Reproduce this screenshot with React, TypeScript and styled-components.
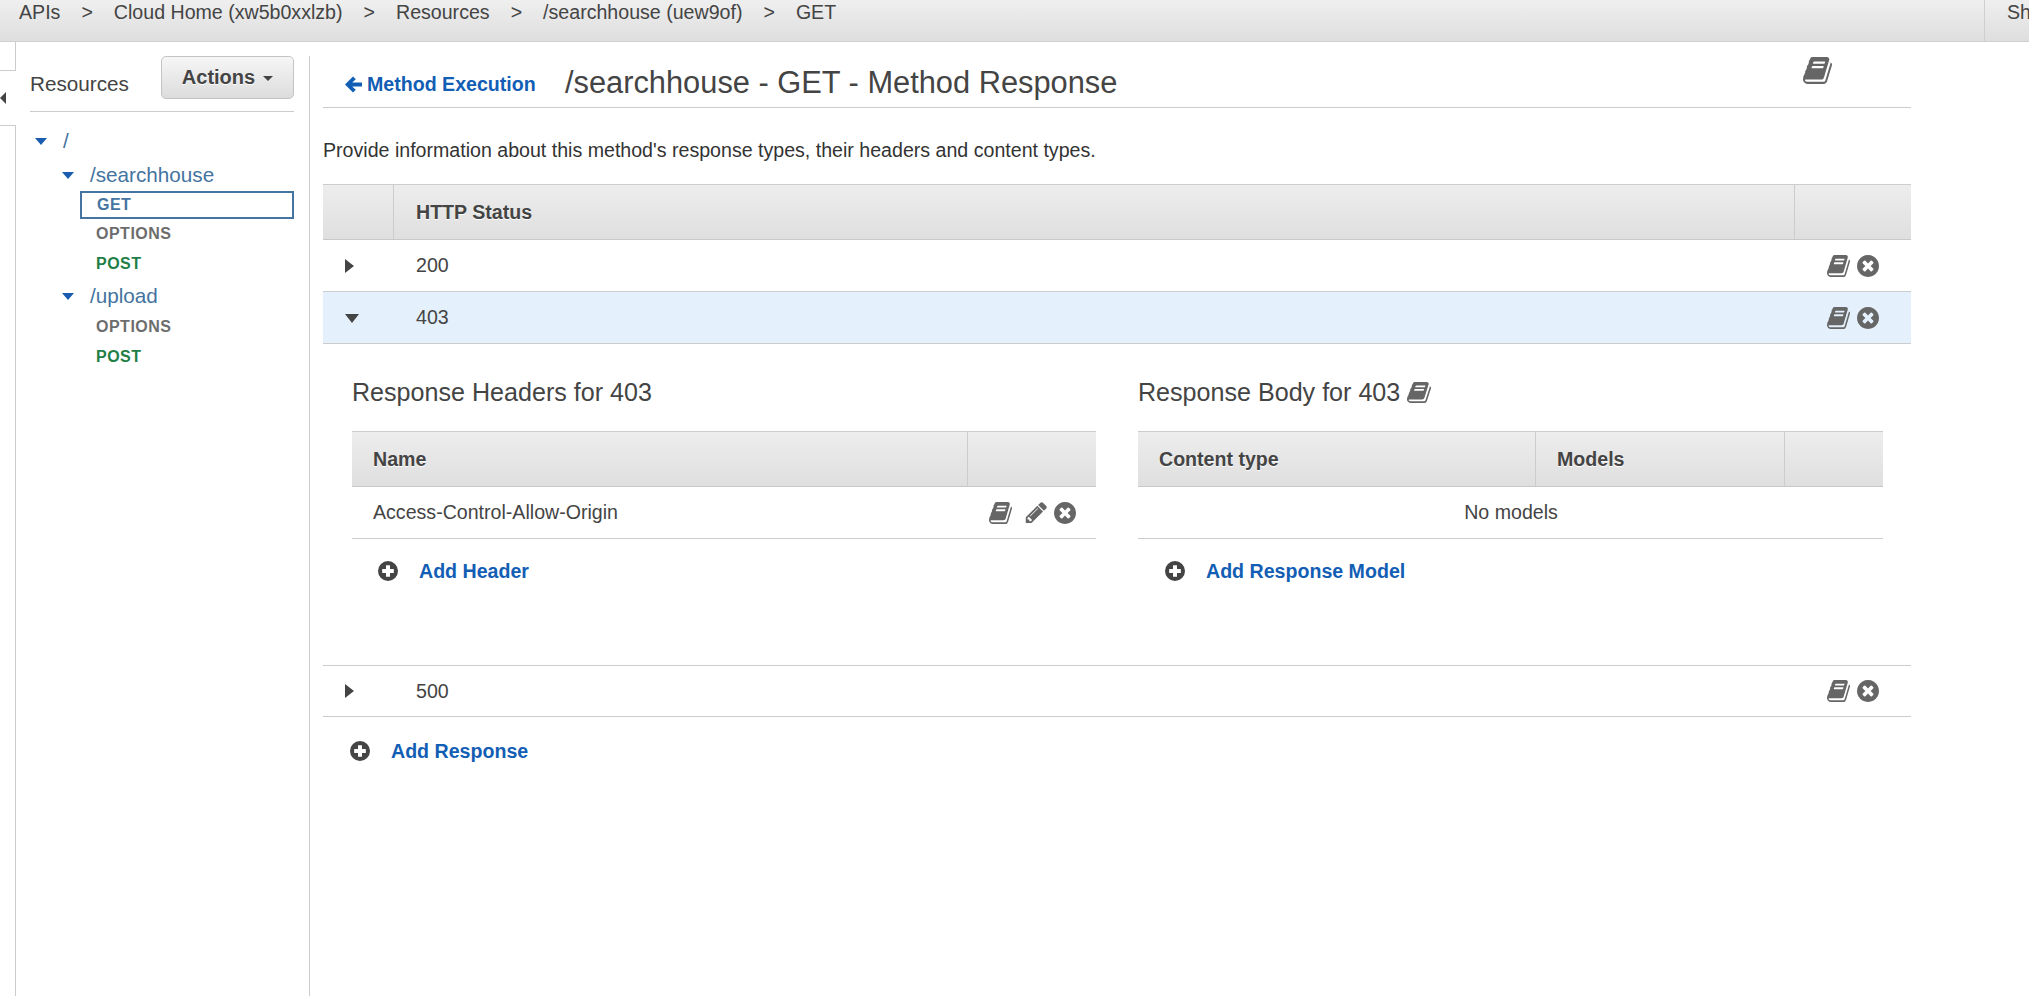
import {FC} from 'react';
import styled, {createGlobalStyle} from 'styled-components';

const BOOK = 'M1639 478q40 57 18 129l-275 906q-19 64-76.5 107.5t-122.5 43.5h-923q-77 0-148.5-53.5t-99.5-131.5q-24-67-2-127 0-4 3-27t4-37q1-8-3-21.5t-3-19.5q2-11 8-21t16.5-23.5 16.5-23.5q23-38 45-91.5t30-91.5q3-10 .5-30t-.5-28q3-11 17-28t17-23q21-36 42-92t25-90q1-9-2.5-32t.5-28q4-13 22-30.5t22-22.5q19-26 42.5-84.5t27.5-96.5q1-8-3-25.5t-2-26.5q2-8 9-18t18-23 17-21q8-12 16.5-30.5t15-35 16-36 19.5-32 26.5-23.5 36-11.5 47.5 5.5l-1 3q38-9 51-9h761q74 0 114 56t18 130l-274 906q-36 119-71.5 153.5t-128.5 34.5h-869q-27 0-38 15-11 16-1 43 24 70 144 70h923q29 0 56-15.5t35-41.5l300-987q7-22 5-57 38 15 59 43zm-1064 2q-4 13 2 22.5t20 9.5h608q13 0 25.5-9.5t16.5-22.5l21-64q4-13-2-22.5t-20-9.5h-608q-13 0-25.5 9.5t-16.5 22.5zm-83 256q-4 13 2 22.5t20 9.5h608q13 0 25.5-9.5t16.5-22.5l21-64q4-13-2-22.5t-20-9.5h-608q-13 0-25.5 9.5t-16.5 22.5z';
const TIMES = 'M1149 1122q0-26-19-45l-181-181 181-181q19-19 19-45 0-27-19-46l-90-90q-19-19-46-19-26 0-45 19l-181 181-181-181q-19-19-45-19-27 0-46 19l-90 90q-19 19-19 46 0 26 19 45l181 181-181 181q-19 19-19 45 0 27 19 46l90 90q19 19 46 19 26 0 45-19l181-181 181 181q19 19 45 19 27 0 46-19l90-90q19-19 19-46zm387-226q0 209-103 385.5t-279.5 279.5-385.5 103-385.5-103-279.5-279.5-103-385.5 103-385.5 279.5-279.5 385.5-103 385.5 103 279.5 279.5 103 385.5z';
const PENCIL = 'M491 1536l91-91-235-235-91 91v107h128v128h107zm523-928q0-22-22-22-10 0-17 7l-542 542q-7 7-7 17 0 22 22 22 10 0 17-7l542-542q7-7 7-17zm-54-192l416 416-832 832h-416v-416zm683 96q0 53-37 90l-166 166-416-416 166-165q36-38 90-38 53 0 91 38l235 234q37 39 37 91z';
const PLUS = 'M768 128a768 768 0 1 0 0 1536a768 768 0 1 0 0-1536zM640 448h256q26 0 26 26v268h268q26 0 26 26v256q0 26-26 26h-268v268q0 26-26 26h-256q-26 0-26-26v-268h-268q-26 0-26-26v-256q0-26 26-26h268v-268q0-26 26-26z';

const GlobalStyle = createGlobalStyle`
  html, body {
    margin: 0;
    padding: 0;
    background: #fff;
  }
  body {
    font-family: "Liberation Sans", Arial, sans-serif;
    color: #444;
    overflow: hidden;
  }
`;

const Page = styled.div`
  display: flex;
  flex-direction: column;
  height: 996px;
  overflow: hidden;
`;

const TopBar = styled.div`
  display: flex;
  justify-content: space-between;
  height: 41px;
  flex: none;
  background: linear-gradient(#efefef, #dedede);
  border-bottom: 1px solid #cfcfcf;
  font-size: 19.6px;
  color: #444;
`;

const Crumbs = styled.div`
  display: flex;
  padding: 1px 0 0 19px;
  line-height: 22px;
`;

const CrumbSep = styled.span`
  margin: 0 21px;
`;

const ShortcutCell = styled.div`
  width: 22px;
  padding: 1px 0 0 22px;
  border-left: 1px solid #cfcfcf;
  line-height: 22px;
  overflow: hidden;
  white-space: nowrap;
`;

const Body = styled.div`
  flex: 1;
  display: flex;
  min-height: 0;
`;

const Rail = styled.div`
  width: 16px;
  flex: none;
  display: flex;
  flex-direction: column;
`;

const RailTop = styled.div`
  height: 28px;
  border-right: 1px solid #ccc;
  border-bottom: 1px solid #ccc;
`;

const RailHandle = styled.div`
  height: 54px;
  display: flex;
  align-items: center;
`;

const RailArrow = styled.span`
  width: 0;
  height: 0;
  border-top: 6px solid transparent;
  border-bottom: 6px solid transparent;
  border-right: 6px solid #444;
`;

const RailBottom = styled.div`
  flex: 1;
  border-top: 1px solid #ccc;
  border-right: 1px solid #ccc;
`;

const Sidebar = styled.aside`
  width: 264px;
  flex: none;
  margin-top: 14px;
  padding: 0 15px 0 14px;
  border-right: 1px solid #ccc;
`;

const SidebarHead = styled.div`
  display: flex;
  justify-content: space-between;
  height: 55px;
  border-bottom: 1px solid #ccc;
`;

const SidebarTitle = styled.div`
  font-size: 20.7px;
  line-height: 24px;
  padding-top: 16px;
  color: #444;
`;

const ActionsButton = styled.button`
  display: flex;
  align-items: center;
  justify-content: center;
  gap: 8px;
  width: 133px;
  height: 43px;
  padding: 0 0 1px;
  background: linear-gradient(#f6f6f6, #dcdcdc);
  border: 1px solid #c4c4c4;
  border-radius: 5px;
  font: bold 20px "Liberation Sans", Arial, sans-serif;
  color: #444;
  text-shadow: 0 1px 0 #fff;
`;

const Caret = styled.span`
  width: 0;
  height: 0;
  margin-top: 3px;
  border-top: 5px solid #444;
  border-left: 5px solid transparent;
  border-right: 5px solid transparent;
`;

const Tree = styled.div`
  padding-top: 17px;
`;

const ResourceRow = styled.div<{$depth: number; $gap?: number}>`
  display: flex;
  align-items: center;
  height: 24px;
  padding-left: ${props => 5 + props.$depth * 27}px;
  margin-top: ${props => props.$gap || 0}px;
  font-size: 20.7px;
  color: #44749f;
`;

const BlueCaret = styled.span`
  width: 0;
  height: 0;
  margin-right: 16px;
  border-top: 7px solid #1a5cb0;
  border-left: 6.5px solid transparent;
  border-right: 6.5px solid transparent;
`;

const METHOD_COLORS: Record<string, string> = {
  GET: '#44749f',
  OPTIONS: '#6d6d6d',
  POST: '#1f7f47',
};

const MethodRow = styled.div<{$name: string; $selected?: boolean}>`
  display: flex;
  align-items: center;
  box-sizing: border-box;
  height: ${props => props.$selected ? 28 : 30}px;
  margin-left: 50px;
  padding-left: ${props => props.$selected ? 15 : 16}px;
  border: ${props => props.$selected ? '2px solid #44749f' : 'none'};
  font-size: 16px;
  font-weight: bold;
  letter-spacing: 0.5px;
  color: ${props => METHOD_COLORS[props.$name]};
`;

const MethodGap = styled.div<{$size: number}>`
  height: ${props => props.$size}px;
`;

const Main = styled.main`
  width: 1588px;
  flex: none;
  margin-left: 13px;
`;

const PageHead = styled.div`
  display: flex;
  align-items: center;
  box-sizing: border-box;
  height: 66px;
  padding-top: 16px;
  border-bottom: 1px solid #ccc;
  position: relative;
`;

const BackLink = styled.a`
  display: flex;
  align-items: center;
  gap: 5px;
  width: 242px;
  margin-top: 4px;
  padding-left: 22px;
  box-sizing: border-box;
  font-size: 19.6px;
  font-weight: bold;
  color: #125eb4;
`;

const PageTitle = styled.h1`
  margin: 0;
  font-size: 30.8px;
  font-weight: normal;
  color: #444;
`;

const HeadBook = styled.div`
  position: absolute;
  left: 1480px;
  top: 15px;
  display: flex;
`;

const Intro = styled.p`
  margin: 0;
  padding-top: 31px;
  height: 45px;
  line-height: 22px;
  font-size: 19.6px;
  color: #333;
`;

const GridHeader = styled.div<{$columns: string}>`
  display: grid;
  grid-template-columns: ${props => props.$columns};
  box-sizing: border-box;
  height: 56px;
  background: linear-gradient(#ededed, #dfdfdf);
  border-top: 1px solid #ccc;
  border-bottom: 1px solid #c8c8c8;
`;

const HeaderCell = styled.div<{$inset?: number}>`
  display: flex;
  align-items: center;
  padding-left: ${props => props.$inset || 21}px;
  border-left: 1px solid #ccc;
  font-size: 19.6px;
  font-weight: bold;
  color: #444;
  text-shadow: 0 1px 0 #fff;

  &:first-child {
    border-left: none;
  }
`;

const StatusRow = styled.div<{$open?: boolean; $height: number}>`
  display: grid;
  grid-template-columns: 93px 1fr auto;
  align-items: center;
  height: ${props => props.$height}px;
  box-sizing: border-box;
  background: ${props => props.$open ? '#e4f1fc' : '#fff'};
  border-bottom: 1px solid #ccc;
  font-size: 19.6px;
  color: #444;
`;

const ToggleCell = styled.div`
  padding-left: 22px;
  display: flex;
`;

const ArrowRight = styled.span`
  width: 0;
  height: 0;
  border-top: 7.5px solid transparent;
  border-bottom: 7.5px solid transparent;
  border-left: 9px solid #444;
`;

const ArrowDown = styled.span`
  width: 0;
  height: 0;
  margin-top: 2px;
  border-top: 9px solid #444;
  border-left: 7.5px solid transparent;
  border-right: 7.5px solid transparent;
`;

const ActionIcons = styled.div`
  display: flex;
  align-items: center;
  gap: 7px;
  padding-right: 32px;
`;

const Detail = styled.div`
  display: flex;
  height: 322px;
  box-sizing: border-box;
  padding: 0 28px 0 29px;
  border-bottom: 1px solid #ccc;
  justify-content: space-between;
`;

const Section = styled.section<{$width: number}>`
  width: ${props => props.$width}px;
`;

const SectionTitle = styled.h3`
  display: flex;
  align-items: center;
  gap: 7px;
  height: 87px;
  margin: 0;
  box-sizing: border-box;
  padding-top: 9px;
  font-size: 25.1px;
  font-weight: normal;
  color: #444;
`;

const DataRow = styled.div`
  display: flex;
  align-items: center;
  justify-content: space-between;
  height: 52px;
  box-sizing: border-box;
  padding: 0 20px 0 21px;
  border-bottom: 1px solid #ccc;
  font-size: 19.6px;
  color: #444;
`;

const EmptyRow = styled(DataRow)`
  justify-content: center;
`;

const RowIcons = styled.div`
  display: flex;
  align-items: center;
  gap: 7px;
`;

const PencilSlot = styled.span`
  margin-left: 5px;
`;

const AddLine = styled.a<{$inset: number; $height: number}>`
  display: flex;
  align-items: center;
  gap: 21px;
  height: ${props => props.$height}px;
  padding-left: ${props => props.$inset}px;
  font-size: 19.6px;
  font-weight: bold;
  color: #125eb4;
`;

const IconSvg = styled.svg<{$color?: string}>`
  display: block;
  flex: none;
  fill: ${props => props.$color || '#666'};
`;

type IconProps = {
    width: number
    height: number
    color?: string
}

const BookIcon: FC<IconProps> = ({width, height, color}) => (
    <IconSvg $color={color} width={width} height={height} viewBox="0 128 1664 1536" preserveAspectRatio="none">
        <path d={BOOK}/>
    </IconSvg>
);

const TimesIcon: FC = () => (
    <IconSvg width={22} height={22} viewBox="0 128 1536 1536">
        <path d={TIMES}/>
    </IconSvg>
);

const PencilIcon: FC = () => (
    <IconSvg width={23} height={23} viewBox="0 128 1664 1536">
        <path d={PENCIL}/>
    </IconSvg>
);

const PlusIcon: FC = () => (
    <IconSvg $color="#444" width={20} height={20} viewBox="0 128 1536 1536">
        <path fillRule="evenodd" d={PLUS}/>
    </IconSvg>
);

const BackArrow: FC = () => (
    <IconSvg $color="#125eb4" width={17} height={17} viewBox="0 0 17 17">
        <path d="M0 8.500 8 .5 10.800 3.300 7.200 6.500H17V10.500H7.200L10.800 13.700 8 16.500Z"/>
    </IconSvg>
);

const crumbs = ['APIs', 'Cloud Home (xw5b0xxlzb)', 'Resources', '/searchhouse (uew9of)', 'GET'];

const statusActions = (
    <ActionIcons>
        <BookIcon width={23} height={22}/>
        <TimesIcon/>
    </ActionIcons>
);

const App: FC = () => {
    return (
        <Page>
            <GlobalStyle/>
            <TopBar>
                <Crumbs>
                    {crumbs.map((crumb, i) => (
                        <span key={crumb}>
                            {i > 0 && <CrumbSep>&gt;</CrumbSep>}
                            {crumb}
                        </span>
                    ))}
                </Crumbs>
                <ShortcutCell>Sh</ShortcutCell>
            </TopBar>
            <Body>
                <Rail>
                    <RailTop/>
                    <RailHandle><RailArrow/></RailHandle>
                    <RailBottom/>
                </Rail>
                <Sidebar>
                    <SidebarHead>
                        <SidebarTitle>Resources</SidebarTitle>
                        <ActionsButton>Actions <Caret/></ActionsButton>
                    </SidebarHead>
                    <Tree>
                        <ResourceRow $depth={0}><BlueCaret/>/</ResourceRow>
                        <ResourceRow $depth={1} $gap={10}><BlueCaret/>/searchhouse</ResourceRow>
                        <MethodGap $size={4}/>
                        <MethodRow $name="GET" $selected>GET</MethodRow>
                        <MethodRow $name="OPTIONS">OPTIONS</MethodRow>
                        <MethodRow $name="POST">POST</MethodRow>
                        <ResourceRow $depth={1} $gap={5}><BlueCaret/>/upload</ResourceRow>
                        <MethodGap $size={4}/>
                        <MethodRow $name="OPTIONS">OPTIONS</MethodRow>
                        <MethodRow $name="POST">POST</MethodRow>
                    </Tree>
                </Sidebar>
                <Main>
                    <PageHead>
                        <BackLink><BackArrow/>Method Execution</BackLink>
                        <PageTitle>/searchhouse - GET - Method Response</PageTitle>
                        <HeadBook><BookIcon width={29} height={27}/></HeadBook>
                    </PageHead>
                    <Intro>Provide information about this method's response types, their headers and content types.</Intro>
                    <GridHeader $columns="70px 1fr 117px">
                        <HeaderCell/>
                        <HeaderCell $inset={22}>HTTP Status</HeaderCell>
                        <HeaderCell/>
                    </GridHeader>
                    <StatusRow $height={52}>
                        <ToggleCell><ArrowRight/></ToggleCell>
                        <span>200</span>
                        {statusActions}
                    </StatusRow>
                    <StatusRow $open $height={52}>
                        <ToggleCell><ArrowDown/></ToggleCell>
                        <span>403</span>
                        {statusActions}
                    </StatusRow>
                    <Detail>
                        <Section $width={744}>
                            <SectionTitle>Response Headers for 403</SectionTitle>
                            <GridHeader $columns="615px 1fr">
                                <HeaderCell>Name</HeaderCell>
                                <HeaderCell/>
                            </GridHeader>
                            <DataRow>
                                Access-Control-Allow-Origin
                                <RowIcons>
                                    <BookIcon width={23} height={22}/>
                                    <PencilSlot><PencilIcon/></PencilSlot>
                                    <TimesIcon/>
                                </RowIcons>
                            </DataRow>
                            <AddLine $inset={26} $height={64}><PlusIcon/>Add Header</AddLine>
                        </Section>
                        <Section $width={745}>
                            <SectionTitle>
                                Response Body for 403
                                <BookIcon width={24} height={21}/>
                            </SectionTitle>
                            <GridHeader $columns="397px 249px 1fr">
                                <HeaderCell>Content type</HeaderCell>
                                <HeaderCell>Models</HeaderCell>
                                <HeaderCell/>
                            </GridHeader>
                            <EmptyRow>No models</EmptyRow>
                            <AddLine $inset={27} $height={64}><PlusIcon/>Add Response Model</AddLine>
                        </Section>
                    </Detail>
                    <StatusRow $height={51}>
                        <ToggleCell><ArrowRight/></ToggleCell>
                        <span>500</span>
                        {statusActions}
                    </StatusRow>
                    <AddLine $inset={27} $height={68}><PlusIcon/>Add Response</AddLine>
                </Main>
            </Body>
        </Page>
    );
};

export default App;
